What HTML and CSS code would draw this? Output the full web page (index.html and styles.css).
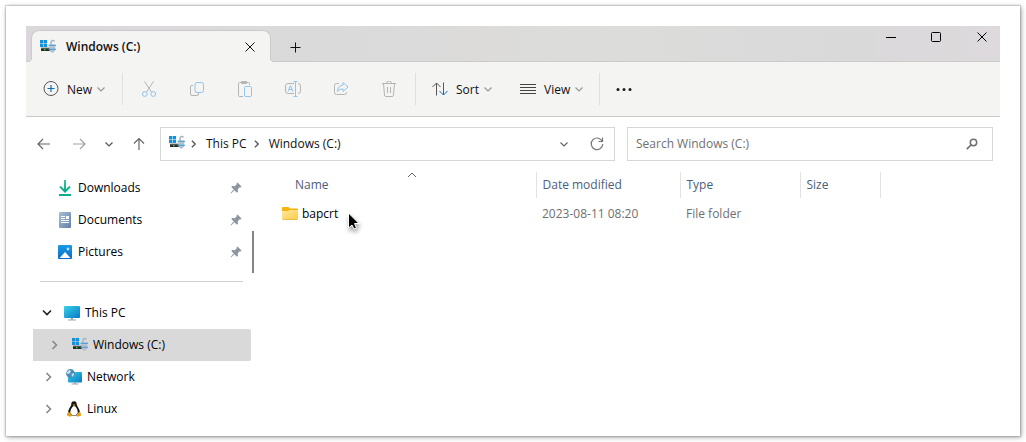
FILE: index.html
```html
<!DOCTYPE html>
<html lang="en">
<head>
<meta charset="utf-8">
<title>Windows (C:)</title>
<link rel="stylesheet" href="styles.css">
</head>
<body>
<svg class="defs" aria-hidden="true">
  <defs>
    <linearGradient id="g-screen" x1="0" y1="0" x2="1" y2="1"><stop offset="0" stop-color="#36d3e6"/><stop offset="1" stop-color="#0b78c6"/></linearGradient>
    <linearGradient id="g-doc" x1="0" y1="0" x2="1" y2="1"><stop offset="0" stop-color="#a9bfd6"/><stop offset="1" stop-color="#6280a6"/></linearGradient>
    <linearGradient id="g-pic" x1="0" y1="0" x2="0" y2="1"><stop offset="0" stop-color="#1a9be6"/><stop offset="1" stop-color="#0a6cc4"/></linearGradient>
    <linearGradient id="g-folder" x1="0" y1="0" x2="1" y2="1"><stop offset="0" stop-color="#ffe9a0"/><stop offset="1" stop-color="#fccb45"/></linearGradient>
    <linearGradient id="g-down" x1="0" y1="0" x2="0" y2="1"><stop offset="0" stop-color="#3ccb92"/><stop offset="1" stop-color="#08a88f"/></linearGradient>
  </defs>
  <symbol id="drive" viewBox="0 0 16 16">
    <path fill="#1590dc" d="M0 1h3.300v3.300H0zM3.800 1h3.300v3.300H3.800zM0 4.800h3.300v3.300H0zM3.800 4.800h3.300v3.300H3.800z"/>
    <path fill="#8a8a8a" d="M1 8.500h9v1H1z"/><path fill="#2b2b2b" d="M1 9.300h9.500V12H1z"/><path fill="#2fe04c" d="M4 10h1.500v1.300H4z"/>
    <path fill="none" stroke="#a7b4bf" stroke-width="1.500" d="M11 6V3.300a1.900 1.900 0 0 1 3.500-1"/>
    <path fill="#b3c2ce" d="M9.300 5.500h6v5.500l-1 1.500-2 1.500-2-1.500-1-1.500z"/>
    <path stroke="#3d9ddb" d="M8.500 6.300h7.500M8.500 10.300h7.500"/>
  </symbol>
  <symbol id="down" viewBox="0 0 10 10"><path fill="none" stroke="currentColor" stroke-width="1.200" d="M1.500 3.500 5 7l3.500-3.500"/></symbol>
  <symbol id="right" viewBox="0 0 12 12"><path fill="none" stroke="currentColor" stroke-width="1.600" d="M3.500 2l4 4-4 4"/></symbol>
  <symbol id="pin" viewBox="0 0 12 12"><path fill="#8b969e" d="M7.500.5l4 4-.8 1-1-.2-1.900 2 .1 2.500-1 1-2.500-2.500L1 11.500.5 11l3.300-3.500L1.300 5l1-1 2.500.2 2-2-.2-1z"/></symbol>
  <symbol id="close" viewBox="0 0 12 12"><path fill="none" stroke="currentColor" d="M1.500 1.500l9 9M10.500 1.500l-9 9"/></symbol>
</svg>

<main class="window">
  <header class="titlebar">
    <div class="tab">
      <svg class="icon"><use href="#drive"/></svg>
      <span class="tab-title">Windows (C:)</span>
      <button class="tab-close" aria-label="Close tab"><svg class="icon-small"><use href="#close"/></svg></button>
    </div>
    <button class="tab-add" aria-label="New tab"><svg class="icon-small" viewBox="0 0 12 12"><path stroke="currentColor" d="M6.500 1.500v10M1.500 6.500h10"/></svg></button>
    <div class="captions">
      <button aria-label="Minimize"><svg class="icon-small" viewBox="0 0 12 12"><path stroke="currentColor" d="M1 6.500h10"/></svg></button>
      <button aria-label="Maximize"><svg class="icon-small" viewBox="0 0 12 12"><rect x="1.500" y="1.500" width="9" height="9" rx="1" fill="none" stroke="currentColor"/></svg></button>
      <button aria-label="Close"><svg class="icon-small"><use href="#close"/></svg></button>
    </div>
  </header>

  <div class="toolbar" role="toolbar" aria-label="Commands">
    <button class="command command-new">
      <svg class="icon" viewBox="0 0 16 16" fill="none"><circle cx="8" cy="7.500" r="7" stroke="#555"/><path stroke="#0f6cbd" stroke-width="1.200" d="M8 4v7M4.500 7.500h7"/></svg>
      <span>New</span><svg class="caret"><use href="#down"/></svg>
    </button>
    <span class="divider"></span>
    <div class="tools">
      <button disabled aria-label="Cut"><svg class="icon" viewBox="0 0 16 16" fill="none"><path stroke="#b5b5b5" d="M3.500.5l7 10.500M12.500.5l-7 10.500"/><circle cx="3.800" cy="13" r="2.400" stroke="#93c4ea"/><circle cx="12.200" cy="13" r="2.400" stroke="#93c4ea"/></svg></button>
      <button disabled aria-label="Copy"><svg class="icon" viewBox="0 0 16 16" fill="none"><path stroke="#b5b5b5" d="M4 4.500H3a1.500 1.500 0 0 0-1.500 1.500v7A1.500 1.500 0 0 0 3 14.500h5A1.500 1.500 0 0 0 9.500 13v-1"/><rect x="6" y="1.500" width="8.500" height="10" rx="2" stroke="#93c4ea"/></svg></button>
      <button disabled aria-label="Paste"><svg class="icon" viewBox="0 0 16 16" fill="none"><path stroke="#b5b5b5" d="M6 15.500H2.500a1 1 0 0 1-1-1v-12a1 1 0 0 1 1-1h9a1 1 0 0 1 1 1V4M4.500.5h5v2h-5z"/><rect x="7.500" y="5.500" width="7" height="10" rx="1" stroke="#93c4ea"/></svg></button>
      <button disabled aria-label="Rename"><svg class="icon" viewBox="0 0 16 16" fill="none"><path stroke="#b5b5b5" d="M9 2.500H3A2.500 2.500 0 0 0 .5 5v5A2.500 2.500 0 0 0 3 12.500h6M13 2.500a2.500 2.500 0 0 1 2.500 2.500v5a2.500 2.500 0 0 1-2.500 2.500"/><path stroke="#93c4ea" d="M8.500.5h4M8.500 15.500h4M10.500.5v15M3 10.500l2.500-6 2.500 6M4 8.500h3"/></svg></button>
      <button disabled aria-label="Share"><svg class="icon" viewBox="0 0 16 16" fill="none"><path stroke="#b5b5b5" d="M6 2.500H3.500a2 2 0 0 0-2 2v7a2 2 0 0 0 2 2h8a2 2 0 0 0 2-2V11"/><path stroke="#93c4ea" stroke-linejoin="round" d="M10 1.500l5 4.500-5 4.500V8C7 8 5.500 9 4.500 10.500 4.500 7 6.500 4.500 10 4z"/></svg></button>
      <button disabled aria-label="Delete"><svg class="icon" viewBox="0 0 16 16" fill="none" stroke="#b5b5b5"><path d="M1 2.500h14M5.500 2.500a2.500 2.500 0 0 1 5 0M2.500 2.500l1 11.500a1.500 1.500 0 0 0 1.500 1.500h6a1.500 1.500 0 0 0 1.500-1.500l1-11.500M6.500 6v6M9.500 6v6"/></svg></button>
    </div>
    <span class="divider"></span>
    <button class="command command-sort">
      <svg class="icon" viewBox="0 0 16 16" fill="none"><path stroke="#555" d="M4.500 14.500V2M.5 6l4-4 4 4"/><path stroke="#0f6cbd" d="M11.500 1.500V14M7.500 10l4 4 4-4"/></svg>
      <span>Sort</span><svg class="caret"><use href="#down"/></svg>
    </button>
    <button class="command command-view">
      <svg class="icon" viewBox="0 0 16 16"><path stroke="#444" d="M0 3.500h16M0 6.500h16M0 9.500h16M0 12.500h16"/></svg>
      <span>View</span><svg class="caret"><use href="#down"/></svg>
    </button>
    <span class="divider"></span>
    <button class="command command-more" aria-label="See more"><svg class="icon" viewBox="0 0 16 16" fill="#1a1a1a"><circle cx="2" cy="8.500" r="1.500"/><circle cx="8" cy="8.500" r="1.500"/><circle cx="14" cy="8.500" r="1.500"/></svg></button>
  </div>

  <div class="navbar">
    <div class="history">
      <button aria-label="Back"><svg class="icon" viewBox="0 0 16 16"><path fill="none" stroke="#666" stroke-width="1.200" d="M14 8H2.500M7 3L2 8l5 5"/></svg></button>
      <button aria-label="Forward" disabled><svg class="icon" viewBox="0 0 16 16"><path fill="none" stroke="#a3a3a3" stroke-width="1.200" d="M2 8h11.500M9 3l5 5-5 5"/></svg></button>
      <button class="recent" aria-label="Recent locations"><svg class="caret-wide"><use href="#down"/></svg></button>
      <button aria-label="Up"><svg class="icon" viewBox="0 0 16 16"><path fill="none" stroke="#666" stroke-width="1.200" d="M8 14V2.500M3 7.500L8 2.500l5 5"/></svg></button>
    </div>
    <nav class="address" aria-label="Address">
      <svg class="icon"><use href="#drive"/></svg>
      <svg class="crumb-arrow"><use href="#right"/></svg>
      <a href="#this-pc">This PC</a>
      <svg class="crumb-arrow"><use href="#right"/></svg>
      <a href="#drive-c">Windows (C:)</a>
      <button class="address-history" aria-label="Previous locations"><svg class="caret-wide"><use href="#down"/></svg></button>
      <button aria-label="Refresh"><svg class="icon" viewBox="0 0 16 16"><path fill="none" stroke="#777" stroke-width="1.200" d="M13.500 6A5.800 5.800 0 1 0 13.800 8M13.500 1.500V5.500H9.500"/></svg></button>
    </nav>
    <form class="search">
      <input type="text" placeholder="Search Windows (C:)" aria-label="Search Windows (C:)">
      <button type="button" aria-label="Search"><svg class="icon-small" viewBox="0 0 12 12"><circle cx="7.500" cy="4.500" r="3.200" fill="none" stroke="#707070" stroke-width="1.500"/><path stroke="#707070" stroke-width="1.700" d="M5 7L.8 11.200"/></svg></button>
    </form>
  </div>

  <div class="content">
    <aside class="sidebar">
      <ul class="quick">
        <li><a class="item" href="#downloads"><svg class="icon" viewBox="0 0 16 16"><path fill="none" stroke="url(#g-down)" stroke-width="2" d="M8 0l.01 11M3 6.500l5 5 5-5"/><path fill="#10ad90" d="M2 14h12v2H2z"/></svg><span>Downloads</span><svg class="pin"><use href="#pin"/></svg></a></li>
        <li><a class="item" href="#documents"><svg class="icon" viewBox="0 0 16 16"><rect x="2" y="0" width="12" height="16" rx="1" fill="url(#g-doc)"/><path fill="#fff" d="M4 4h4v1H4zM4 6h4v1H4zM9 4h3v3H9zM4 8h8v1H4zM4 10h8v1H4z"/></svg><span>Documents</span><svg class="pin"><use href="#pin"/></svg></a></li>
        <li><a class="item" href="#pictures"><svg class="icon" viewBox="0 0 16 16"><rect x="1" y="1" width="14" height="14" rx="1" fill="url(#g-pic)"/><path fill="#fff" d="M2.500 14L8 8l5.500 6zM11 3l.6 1.400L13 5l-1.400.6L11 7l-.6-1.400L9 5l1.400-.6z"/></svg><span>Pictures</span><svg class="pin"><use href="#pin"/></svg></a></li>
      </ul>
      <ul class="tree">
        <li><a class="item root" href="#this-pc"><svg class="expander open"><use href="#right"/></svg><svg class="icon" viewBox="0 0 16 16"><rect x="0" y="1" width="16" height="12" rx="1" fill="url(#g-screen)"/><path fill="#9aa7b2" d="M7 13h2v1.500h3v1H4v-1h3z"/></svg><span>This PC</span></a></li>
        <li><a class="item child selected" href="#drive-c" aria-current="page"><svg class="expander"><use href="#right"/></svg><svg class="icon"><use href="#drive"/></svg><span>Windows (C:)</span></a></li>
        <li><a class="item place" href="#network"><svg class="expander"><use href="#right"/></svg><svg class="icon" viewBox="0 0 16 16"><rect x="2" y="3" width="14" height="10.500" rx="1" fill="url(#g-screen)"/><path fill="#9aa7b2" d="M8 13.500h2v1h2.500v1h-7v-1H8z"/><circle cx="4.500" cy="4.500" r="4.400" fill="#4a8db8"/><path fill="#c3e2ef" d="M1.500 2.500L4 .8l1 2-2 2.200-2.500-.5zM5.500 5l2.500-1v2L6 8z"/></svg><span>Network</span></a></li>
        <li><a class="item place" href="#linux"><svg class="expander"><use href="#right"/></svg><svg class="icon" viewBox="0 0 16 16"><path fill="#161616" d="M8 .3c2 0 2.700 1.300 2.700 3 0 2 3.300 4.500 3.300 8.700l-2 2.500H4L2 12c0-4 3.300-6.700 3.300-8.700 0-1.700.7-3 2.700-3z"/><path fill="#fff" d="M8 5c1.700 0 3.800 3.500 3.800 7L10 14H6l-1.800-2C4.200 9 6.300 5 8 5z"/><path fill="#e2a112" d="M6.500 3.500h3L8 5.300zM2.500 10.500l3.200 3.500-1 1.800-3.700-1 .3-2.800zM13.500 10.500l-3.200 3.500 1 1.800 3.700-1-.3-2.800z"/></svg><span>Linux</span></a></li>
      </ul>
      <span class="scrollbar"></span>
    </aside>

    <section class="files">
      <table>
        <colgroup><col class="col-name"><col class="col-date"><col class="col-type"><col class="col-size"><col></colgroup>
        <thead>
          <tr>
            <th aria-sort="ascending"><div class="name-head">Name<svg class="sort-mark" viewBox="0 0 10 10"><path fill="none" stroke="#666" d="M1 7l4-4 4 4"/></svg></div></th>
            <th>Date modified</th><th>Type</th><th>Size</th><td></td>
          </tr>
        </thead>
        <tbody>
          <tr>
            <td><a class="file" href="#bapcrt">
              <svg class="icon" viewBox="0 0 16 16"><path fill="#f7b50c" d="M0 2a1 1 0 0 1 1-1h5.500L8 2.500h7a1 1 0 0 1 1 1V7H0z"/><path fill="url(#g-folder)" d="M0 5h6l1.500-1H16v8.500a1 1 0 0 1-1 1H1a1 1 0 0 1-1-1z"/><path fill="#e5ad2c" d="M.5 13h15l-.5.800H1z"/></svg>
              <span>bapcrt</span>
              <svg class="pointer" viewBox="0 0 16 20"><path fill="#000" stroke="#fff" d="M1.500 1v15l3.500-3 2 4 2.500-1-2-4.500h4.500z"/></svg>
            </a></td>
            <td>2023-08-11 08:20</td><td>File folder</td><td></td><td></td>
          </tr>
        </tbody>
      </table>
    </section>
  </div>
</main>
</body>
</html>
```
FILE: styles.css
```css
* { box-sizing: border-box; }

body {
  margin: 0;
  padding: 6px;
  min-height: 100vh;
  display: flex;
  background: #fff;
  color: #111;
  font: 12px/16px "Open Sans", "Noto Sans", sans-serif;
}

svg { display: block; flex: none; }
ul { list-style: none; margin: 0; padding: 0; }
a { color: inherit; text-decoration: none; }

button {
  display: flex;
  align-items: center;
  justify-content: center;
  padding: 0;
  border: 0;
  background: none;
  color: inherit;
  font: inherit;
}

.defs { position: absolute; width: 0; height: 0; }
.icon { width: 16px; height: 16px; }
.icon-small { width: 12px; height: 12px; }

.window {
  flex: 1;
  min-width: 0;
  padding: 20px 20px 11px;
  background: #fff;
  box-shadow: 0 0 1px 1px rgba(0, 0, 0, .12), 1px 1px 5px rgba(0, 0, 0, .4);
}

/* Title bar */
.titlebar {
  display: flex;
  height: 36px;
  padding-left: 5px;
  border-bottom: 1px solid #cccacc;
  background: linear-gradient(90deg, #dad8db, #dcdcda 60%, #dad9da 85%, #ddd9dc);
}

.tab {
  position: relative;
  display: flex;
  align-items: center;
  width: 240px;
  height: 32px;
  margin: 4px 0 -1px;
  padding: 0 14px 0 8px;
  border: 1px solid #cccacc;
  border-bottom: 0;
  border-radius: 8px 8px 0 0;
  background: #f4f4f3;
}

/* Flared feet joining the tab to the command bar */
.tab::before,
.tab::after {
  content: "";
  position: absolute;
  bottom: 0;
  width: 4px;
  height: 4px;
}

.tab::before { right: 100%; background: radial-gradient(circle at 0 0, transparent 3px, #cccacc 3px 4px, #f4f4f3 4px); }
.tab::after { left: 100%; background: radial-gradient(circle at 100% 0, transparent 3px, #cccacc 3px 4px, #f4f4f3 4px); }

.tab-title { margin-left: 10px; font-weight: 600; }
.tab-close { margin-left: auto; }
.tab-add { width: 48px; padding-top: 6px; }

.captions {
  display: flex;
  height: 22px;
  margin-left: auto;
  color: #000;
}

.captions button { width: 45px; }
.captions button:last-child { width: 36px; margin-left: 6px; }

/* Command bar */
.toolbar {
  display: flex;
  align-items: center;
  height: 55px;
  padding-left: 17px;
  border-bottom: 1px solid #c8c8c8;
  background: #f4f4f3;
}

.divider { width: 1px; height: 32px; background: #e0e0e0; }
.command { justify-content: flex-start; gap: 8px; }
.command span { padding-top: 2px; }
.command-new { width: 79px; }
.command-sort { width: 88px; margin-left: 16px; }
.command-view { width: 79px; }
.command-more { margin-left: 16px; }
.caret { width: 10px; height: 10px; margin-left: -4px; color: #999; }
.caret-wide { width: 10px; height: 12px; }
.tools { display: flex; padding: 0 2px; }
.tools button { width: 48px; height: 32px; }

/* Navigation row */
.navbar {
  display: grid;
  grid-template-columns: 124px minmax(0, 455fr) minmax(0, 378fr);
  padding: 10px 7px 11px 10px;
}

.history { display: flex; gap: 19px; }
.history .recent { width: 12px; margin: 0 -3px; color: #555; }

.address,
.search {
  display: flex;
  align-items: center;
  height: 34px;
  border: 1px solid #d6d6d6;
}

.address { padding: 0 9px 0 8px; }
.address > .icon { margin-bottom: 2px; }
.crumb-arrow { width: 10px; height: 10px; margin: 0 7px 0 4px; color: #555; }
a + .crumb-arrow { margin-left: 5px; }
.address-history { margin: 0 20px 0 auto; color: #666; }

.search { margin-left: 12px; padding: 0 14px 0 8px; }

.search input {
  flex: 1;
  min-width: 0;
  padding: 0;
  border: 0;
  outline: 0;
  background: none;
  color: #111;
  font: inherit;
}

.search input::placeholder { color: #707070; opacity: 1; }

/* Folder tree */
.content { display: flex; }

.sidebar {
  position: relative;
  flex: none;
  width: 232px;
  padding-left: 7px;
  color: #000;
}

.quick { padding-bottom: 13px; }

.tree::before {
  content: "";
  display: block;
  height: 1px;
  margin: 0 15px 15px 7px;
  background: #d0d0d0;
}

.item {
  display: flex;
  align-items: center;
  width: 218px;
  height: 32px;
  gap: 5px;
}

.quick .item { padding: 0 9px 0 24px; }
.root { padding-left: 8px; }
.child { padding-left: 16px; }
.place { padding-left: 10px; }
.selected { border-radius: 0 2px 2px 0; background: #d9d9d9; }
.pin { width: 12px; height: 12px; margin-left: auto; }
.expander { width: 12px; height: 12px; margin-right: 6px; color: #888; }
.expander.open { color: #222; transform: rotate(90deg); }

.scrollbar {
  position: absolute;
  top: 59px;
  right: 4px;
  width: 2px;
  height: 42px;
  background: #858585;
}

/* File list */
.files { flex: 1; min-width: 0; }

table {
  width: 100%;
  border-collapse: collapse;
  table-layout: fixed;
}

.col-name { width: 278px; }
.col-date { width: 144px; }
.col-type { width: 120px; }
.col-size { width: 80px; }

th, td { padding: 0 0 0 6px; text-align: left; font-weight: 400; }
th { color: #4c607a; }
thead tr { height: 26px; }
thead th + th, thead td { border-left: 1px solid #e2e2e2; }
tbody tr { height: 32px; }
tbody td { color: #707070; }
tbody td:first-child { padding-left: 24px; }

.name-head { position: relative; padding-left: 31px; }
.sort-mark { position: absolute; top: -7px; left: 143px; width: 10px; height: 10px; }

.file {
  position: relative;
  display: flex;
  align-items: center;
  gap: 4px;
  color: #000;
}

.pointer {
  position: absolute;
  top: 6px;
  left: 65px;
  width: 16px;
  height: 20px;
  filter: drop-shadow(1px 3px 2px rgba(0, 0, 0, .4));
}
```
